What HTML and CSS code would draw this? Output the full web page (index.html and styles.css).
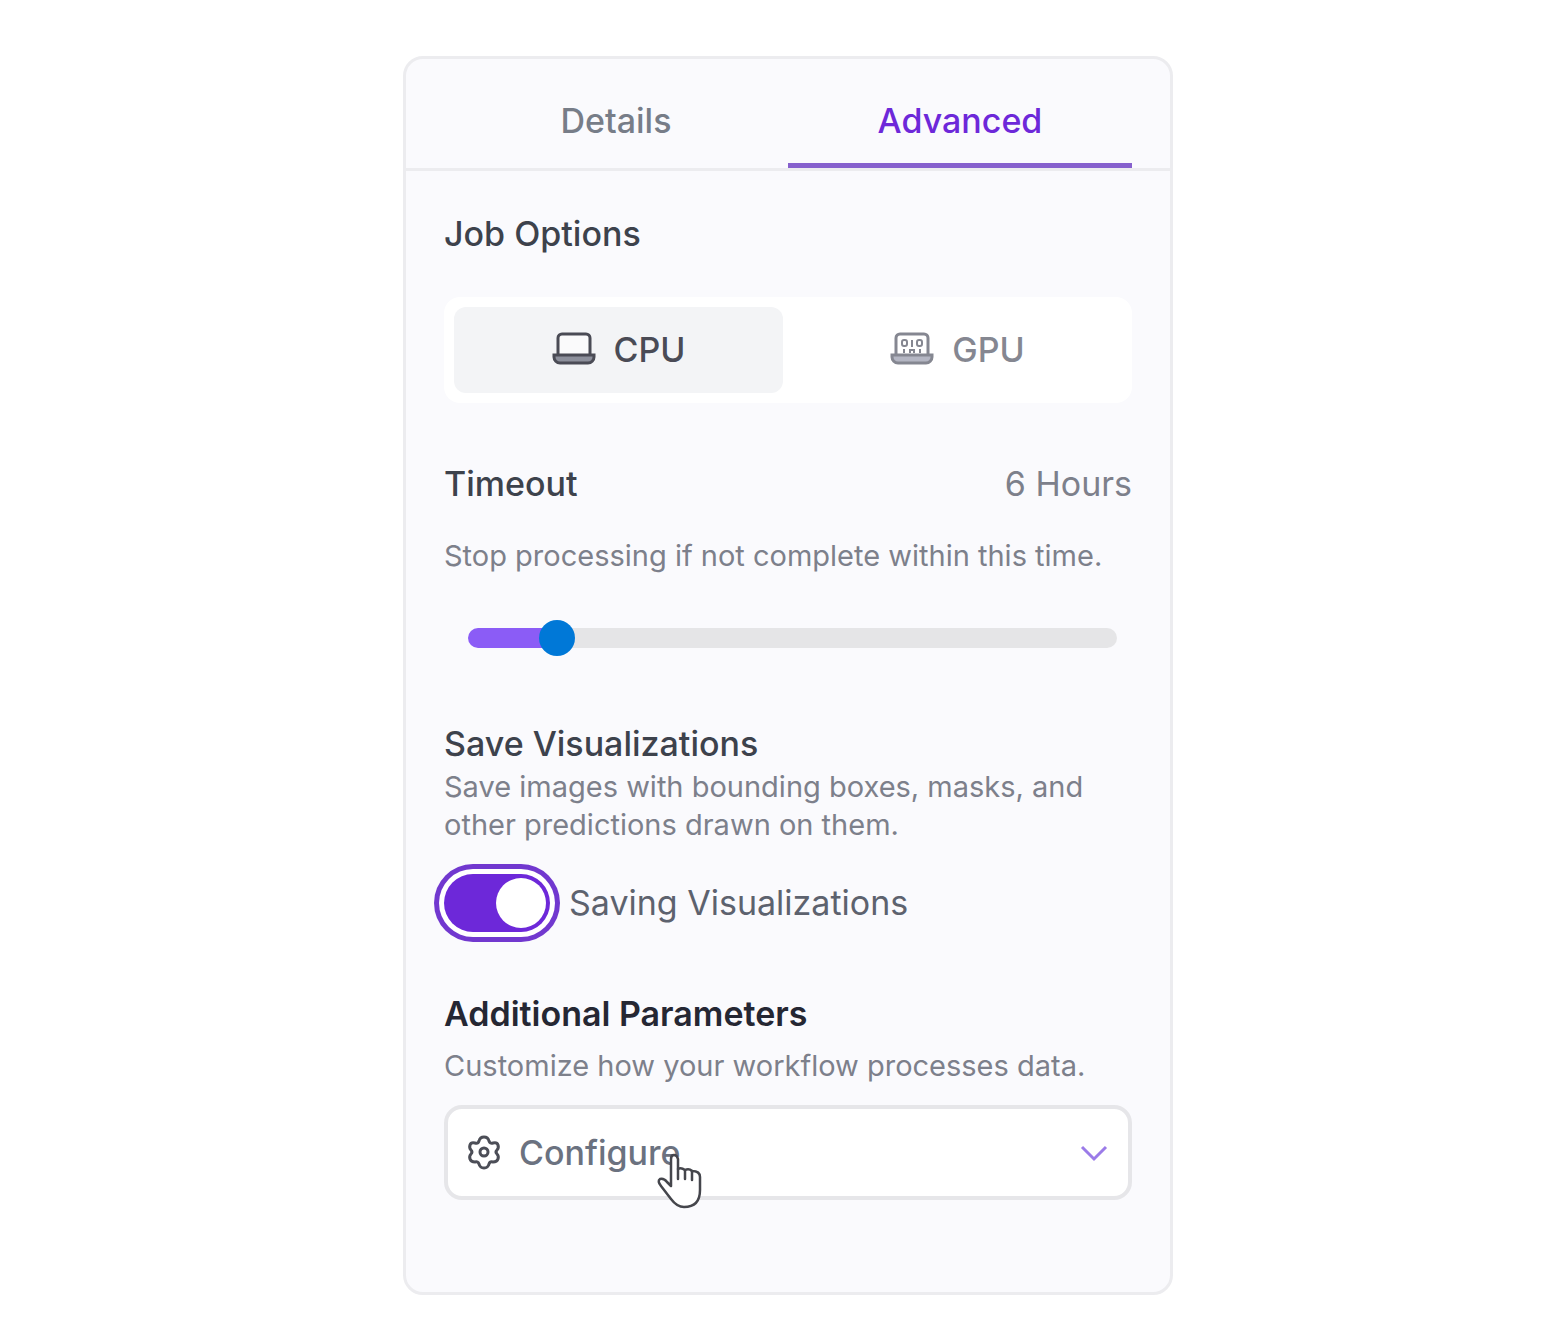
FILE: index.html
```
<!DOCTYPE html>
<html lang="en">
<head>
    <meta charset="UTF-8">
    <meta name="viewport" content="width=device-width, initial-scale=1.0">
    <title>Job Options</title>
    <link rel="stylesheet" href="styles.css">
</head>
<body>
<main class="panel">
    <div class="tabs" role="tablist">
        <button type="button" class="tab" role="tab" aria-selected="false">Details</button>
        <button type="button" class="tab active" role="tab" aria-selected="true">Advanced</button>
    </div>

    <form class="content">
        <section class="group">
            <h2>Job Options</h2>
            <div class="segmented">
                <button type="button" class="segment selected">
                    <svg class="laptop" viewBox="0 0 44 34" fill="none" stroke="currentColor" stroke-width="3">
                        <path d="M6 22V5a4 4 0 0 1 4-4h24a4 4 0 0 1 4 4v17" fill="#fafafb"/>
                        <path d="M2 22h40v2a6 6 0 0 1-6 6h-28a6 6 0 0 1-6-6z" fill="#8c8f9b"/>
                    </svg>
                    CPU
                </button>
                <button type="button" class="segment">
                    <svg class="laptop" viewBox="0 0 44 34" fill="none" stroke="currentColor" stroke-width="3">
                        <path d="M6 22V5a4 4 0 0 1 4-4h24a4 4 0 0 1 4 4v17"/>
                        <path d="M2 22h40v2a6 6 0 0 1-6 6h-28a6 6 0 0 1-6-6z" fill="#b4b6c3"/>
                        <g stroke-width="2">
                            <rect x="12" y="7" width="5" height="6" rx="2"/>
                            <path d="M21 8h1v6"/>
                            <rect x="27" y="7" width="5" height="6" rx="2"/>
                            <path d="M14 16v4M20 20v-3h4v3M30 16v4"/>
                        </g>
                    </svg>
                    GPU
                </button>
            </div>
        </section>

        <section class="group timeout">
            <div class="row">
                <h2><label for="timeout">Timeout</label></h2>
                <output class="value" for="timeout">6 Hours</output>
            </div>
            <p>Stop processing if not complete within this time.</p>
            <input type="range" id="timeout" class="slider" min="0" max="52" value="6">
        </section>

        <section class="group visual">
            <h2>Save Visualizations</h2>
            <p>Save images with bounding boxes, masks, and other predictions drawn on them.</p>
            <div class="switch-row">
                <input type="checkbox" id="save" class="switch" role="switch" checked>
                <label for="save">Saving Visualizations</label>
            </div>
        </section>

        <section class="group params">
            <h2 class="strong">Additional Parameters</h2>
            <p>Customize how your workflow processes data.</p>
            <button type="button" class="configure">
                <svg class="gear" viewBox="0 0 36 36" fill="none" stroke="currentColor" stroke-width="3" stroke-linejoin="round">
                    <path d="M13 6Q14 2 18 2t5 4q1 3 4 2 4-1 5 2t-1 5q-2 2 0 4 2 2 1 5t-5 3q-3-1-4 2-1 4-5 4t-5-4q-1-3-4-2-4 0-5-3t1-5q2-2 0-4-2-2-1-5t5-2q3 1 4-2z"/>
                    <circle cx="18" cy="17" r="4"/>
                </svg>
                <span>Configure</span>
                <svg class="chevron" viewBox="0 0 28 18" fill="none" stroke="currentColor" stroke-width="3">
                    <path d="M2 3l12 12L26 3"/>
                </svg>
                <!-- pointer over the button -->
                <svg class="pointer" viewBox="0 0 46 60" fill="#fff" stroke="#45464c" stroke-width="2.5" stroke-linejoin="round" stroke-linecap="round">
                    <path d="M14 34V7q0-4 3-4t4 4v10q3-2 7 1 4-2 7 1 8 0 8 6v13q0 17-16 17-7 0-13-8L4 34q-4-5-1-7 4-1 7 3z"/>
                    <path d="M21 17v10M28 18v9M35 19v9" fill="none"/>
                </svg>
            </button>
        </section>
    </form>
</main>
</body>
</html>
```
FILE: styles.css
```
:root{
    --purple:#6d28d9;
    --line:#ececef;
    --muted:#7d808b;
}

*{
    box-sizing: border-box;
}

body{
    margin:0;
    padding:56px 373px 48px 403px;
    background-color:#fff;
    font-family: Inter, "Liberation Sans", sans-serif;
    font-size:34px;
    line-height:42px;
}

button{
    font:inherit;
    border:0;
    cursor:pointer;
}

h2{
    margin:0;
    font-size:34px;
    font-weight:500;
    color:#3d424c;
}

h2.strong{
    font-weight:600;
    color:#252733;
}

p{
    margin:0;
    font-size:29px;
    line-height:38px;
    color:var(--muted);
}

.panel{
    background-color:#fafafd;
    border:3px solid var(--line);
    border-radius:20px;
}

.tabs{
    display:flex;
    padding:0 38px;
    border-bottom:3px solid var(--line);
}

.tab{
    flex:1;
    padding:41px 0 21px;
    background:none;
    border-bottom:5px solid transparent;
    font-weight:500;
    color:#777d88;
}

.tab.active{
    color:var(--purple);
    border-bottom-color:#8660cd;
}

.content{
    padding:42px 38px 92px;
}

.segmented{
    display:flex;
    gap:10px;
    margin-top:42px;
    padding:10px;
    background-color:#fff;
    border-radius:16px;
}

.segment{
    flex:1;
    display:flex;
    align-items:center;
    justify-content:center;
    gap:18px;
    padding:22px 0;
    background:none;
    border-radius:12px;
    font-weight:500;
    color:#858791;
}

.segment.selected{
    background-color:#f3f4f6;
    color:#4a4b55;
}

.laptop{
    width:44px;
    height:34px;
    overflow:visible;
}

.timeout{
    margin-top:60px;
}

.row{
    display:flex;
    justify-content:space-between;
}

.value{
    color:var(--muted);
}

.timeout p{
    margin-top:32px;
}

.slider{
    appearance:none;
    display:block;
    width:calc(100% - 39px);
    height:36px;
    margin:45px 15px 0 24px;
    background:none;
}

.slider::-webkit-slider-runnable-track{
    height:20px;
    border-radius:10px;
    background:linear-gradient(to right, #8b5cf6 14%, #e5e5e7 14%);
}

.slider::-webkit-slider-thumb{
    appearance:none;
    width:36px;
    height:36px;
    margin-top:-8px;
    border-radius:50%;
    background-color:#0078d7;
}

.visual{
    margin-top:67px;
}

.visual p{
    margin-top:3px;
}

.switch-row{
    display:flex;
    align-items:center;
    gap:19px;
    margin-top:30px;
    color:#5d626e;
}

.switch{
    appearance:none;
    display:flex;
    align-items:center;
    justify-content:flex-end;
    width:106px;
    height:58px;
    margin:0;
    padding:4px;
    border-radius:29px;
    background-color:var(--purple);
    box-shadow:0 0 0 5px #fff, 0 0 0 10px #7138cf;
}

.switch::before{
    content:"";
    width:50px;
    height:50px;
    border-radius:50%;
    background-color:#fff;
}

.switch:not(:checked){
    justify-content:flex-start;
    background-color:#d1d5db;
}

.params{
    margin-top:61px;
}

.params p{
    margin-top:12px;
}

.configure{
    position:relative;
    display:flex;
    align-items:center;
    width:100%;
    margin-top:20px;
    padding:23px 20px 22px 18px;
    background-color:#fff;
    border:4px solid #e6e6e9;
    border-radius:18px;
    font-weight:500;
    color:#6b7280;
}

.gear{
    width:36px;
    height:36px;
    margin-right:17px;
    color:#4c4e57;
}

.chevron{
    width:28px;
    height:18px;
    margin-left:auto;
    color:#9b7be8;
}

.pointer{
    position:absolute;
    top:43px;
    left:209px;
    width:46px;
    height:60px;
}
```
